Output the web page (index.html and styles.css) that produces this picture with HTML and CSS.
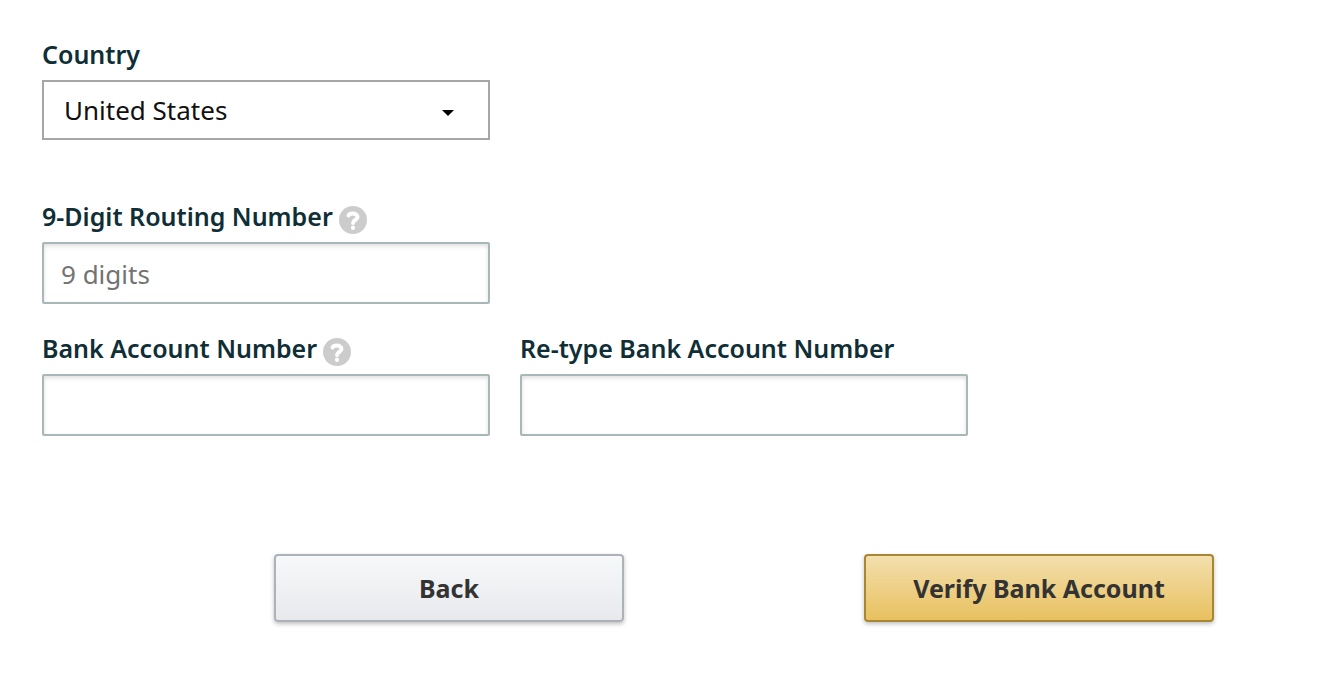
FILE: index.html
```html
<!DOCTYPE html>
<html lang="en">
<head>
<meta charset="UTF-8">
<meta name="viewport" content="width=device-width, initial-scale=1.0">
<title>Bank Account</title>
<link rel="stylesheet" href="styles.css">
</head>
<body>

<form class="bank-form">
    <div class="fields">
        <div class="field country">
            <div class="field-label">
                <label for="country">Country</label>
            </div>
            <div class="select-wrap">
                <select id="country" name="country">
                    <option>United States</option>
                </select>
                <svg class="caret" viewBox="0 0 12 6" aria-hidden="true"><path d="M0 0h12L6 6z"/></svg>
            </div>
        </div>

        <div class="field routing">
            <div class="field-label">
                <label for="routing">9-Digit Routing Number</label>
                <svg class="help" viewBox="0 0 28 28" aria-hidden="true">
                    <circle cx="14" cy="14" r="14"/>
                    <path d="M9.500 9.500C10 8 12 7.500 14 7.500s4.500 1 4.500 3.500c0 3-4.500 3-4.500 6"/>
                    <path d="M14 21.500v.5"/>
                </svg>
            </div>
            <input type="text" id="routing" name="routing" placeholder="9 digits">
        </div>

        <div class="field account">
            <div class="field-label">
                <label for="account">Bank Account Number</label>
                <svg class="help" viewBox="0 0 28 28" aria-hidden="true">
                    <circle cx="14" cy="14" r="14"/>
                    <path d="M9.500 9.500C10 8 12 7.500 14 7.500s4.500 1 4.500 3.500c0 3-4.500 3-4.500 6"/>
                    <path d="M14 21.500v.5"/>
                </svg>
            </div>
            <input type="text" id="account" name="account">
        </div>

        <div class="field">
            <div class="field-label">
                <label for="account-again">Re-type Bank Account Number</label>
            </div>
            <input type="text" id="account-again" name="account-again">
        </div>
    </div>

    <div class="actions">
        <button type="button" class="back">Back</button>
        <button type="submit" class="verify">Verify Bank Account</button>
    </div>
</form>

</body>
</html>
```

FILE: styles.css
```css
* {
    box-sizing: border-box;
}
body {
    margin: 0;
    background-color: #fff;
    font-family: "Noto Sans", sans-serif;
    font-size: 26px;
    color: #111;
}
.bank-form {
    padding: 36px 0 52px;
}

/* Fields */
.fields {
    display: grid;
    grid-template-columns: 1fr 1fr;
    column-gap: 30px;
    row-gap: 26px;
    max-width: 1010px;
    padding: 0 42px;
}
.country,
.routing,
.account {
    grid-column: 1;
}
.country {
    margin-bottom: 32px;
}
.field-label {
    display: flex;
    align-items: center;
    gap: 6px;
    height: 36px;
    margin-bottom: 8px;
    line-height: 36px;
    font-size: 25px;
    font-weight: 600;
    color: #0f2e35;
    white-space: nowrap;
}
.help {
    width: 28px;
    height: 28px;
    margin-top: 8px;
}
.help circle {
    fill: #ccc;
}
.help path {
    fill: none;
    stroke: #fff;
    stroke-width: 4;
    stroke-linecap: round;
}
select,
input[type="text"] {
    display: block;
    width: 100%;
    margin: 0;
    font-family: inherit;
    font-size: 26px;
    color: #111;
    background-color: #fff;
}
select {
    height: 60px;
    padding: 0 60px 0 20px;
    border: 2px solid #a6a6a6;
    border-radius: 0;
    appearance: none;
}
.select-wrap {
    position: relative;
}
.caret {
    position: absolute;
    top: 30px;
    right: 36px;
    width: 12px;
    height: 6px;
    pointer-events: none;
}
input[type="text"] {
    height: 62px;
    padding: 2px 17px 0;
    border: 2px solid #aab7b8;
    border-radius: 2px;
    box-shadow: inset 0 2px 4px rgba(0, 0, 0, 0.13);
}
input::placeholder {
    color: #737373;
}

/* Buttons */
.actions {
    display: grid;
    grid-template-columns: 1fr 1fr;
    margin-top: 118px;
    padding: 0 6px 0 154px;
}
button {
    justify-self: center;
    width: 350px;
    height: 68px;
    padding: 0;
    border: 2px solid #adb1b8;
    border-radius: 4px;
    box-shadow: 0 2px 4px rgba(0, 0, 0, 0.25);
    font-family: inherit;
    font-size: 25px;
    font-weight: 700;
    color: #333;
    cursor: pointer;
}
.back {
    background: linear-gradient(#f7f8fa, #e7e9ec);
}
.verify {
    border-color: #a88734;
    background: linear-gradient(#f3dfae, #e8c15f);
}
```
